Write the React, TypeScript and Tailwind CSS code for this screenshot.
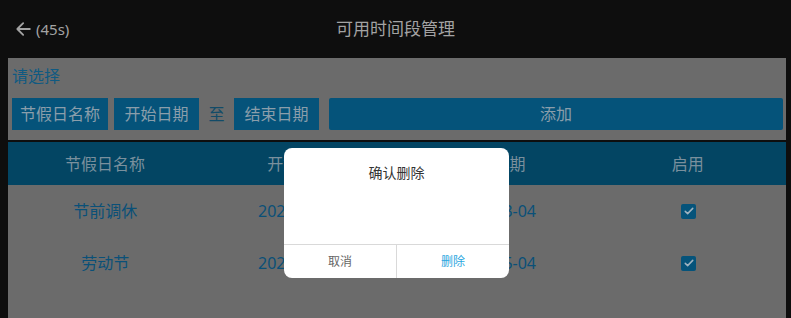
const rows = [
  { name: "节前调休", start: "2023-03-04", end: "2023-03-04" },
  { name: "劳动节", start: "2023-05-04", end: "2023-05-04" },
];

function Check() {
  return (
    <span className="flex h-[15px] w-[15px] items-center justify-center rounded-[2px] bg-[#05537a]">
      <svg viewBox="0 0 16 16" className="h-[12px] w-[12px]" fill="none">
        <path d="M3 8.5l3.2 3L13 4.5" stroke="#9fb3c0" strokeWidth="2" strokeLinecap="round" strokeLinejoin="round" />
      </svg>
    </span>
  );
}

export default function App() {
  return (
    <div
      className="relative flex h-[318px] w-[791px] flex-col overflow-hidden bg-[#0e0e0e]"
      style={{ fontFamily: '"Noto Sans", "Noto Sans CJK SC", sans-serif' }}
    >
      {/* header */}
      <div className="relative flex h-[58px] shrink-0 items-center px-[14px]">
        <div className="flex items-center gap-[2px] text-[#a3a3a3]">
          <svg viewBox="0 0 24 24" className="h-[20px] w-[20px]" fill="none" stroke="currentColor" strokeWidth="2.2" strokeLinecap="round" strokeLinejoin="round">
            <path d="M19 12H5M11 5l-7 7 7 7" />
          </svg>
          <span className="text-[15px]">(45s)</span>
        </div>
        <div className="absolute inset-x-0 text-center text-[17px] text-[#a3a3a3]">可用时间段管理</div>
      </div>

      {/* selection panel */}
      <div className="ml-[8px] mr-[5px] flex h-[82px] shrink-0 flex-col bg-[#6b6b6b] pl-[4px] pr-[3px]">
        <div className="mt-[6px] text-[16px] leading-[24px] text-[#0f5a82]">请选择</div>
        <div className="mt-[10px] flex h-[32px] items-center text-[16px] text-[#8a9eab]">
          <div className="flex h-full w-[96px] items-center justify-center bg-[#05537a]">节假日名称</div>
          <div className="ml-[6px] flex h-full w-[85px] items-center justify-center bg-[#05537a]">开始日期</div>
          <div className="w-[35px] text-center text-[#124b68]">至</div>
          <div className="flex h-full w-[85px] items-center justify-center bg-[#05537a]">结束日期</div>
          <div className="ml-[10px] flex h-full flex-1 items-center justify-center rounded-[2px] bg-[#05537a]">添加</div>
        </div>
      </div>

      {/* table */}
      <div className="ml-[8px] mr-[5px] mt-[2px] flex flex-1 flex-col bg-[#6b6b6b]">
        <div className="grid h-[43px] grid-cols-4 items-center bg-[#034563] pr-[1px] text-center text-[16px] text-[#7a909d]">
          <div>节假日名称</div>
          <div>开始日期</div>
          <div>结束日期</div>
          <div>启用</div>
        </div>
        {rows.map((r) => (
          <div key={r.name} className="grid h-[52px] grid-cols-4 items-center text-center text-[16px] text-[#0a5078]">
            <div>{r.name}</div>
            <div>{r.start}</div>
            <div>{r.end}</div>
            <div className="flex justify-center">
              <Check />
            </div>
          </div>
        ))}
      </div>

      {/* dialog */}
      <div className="absolute left-[284px] top-[148px] flex h-[130px] w-[225px] flex-col overflow-hidden rounded-[8px] bg-white">
        <div className="flex-1 pt-[14px] text-center text-[14px] text-[#333333]">确认删除</div>
        <div className="flex h-[34px] border-t border-[#d9d9d9] text-[12px]">
          <div className="flex flex-1 items-center justify-center text-[#666666]">取消</div>
          <div className="flex flex-1 items-center justify-center border-l border-[#d9d9d9] text-[#2aa6e0]">删除</div>
        </div>
      </div>
    </div>
  );
}
